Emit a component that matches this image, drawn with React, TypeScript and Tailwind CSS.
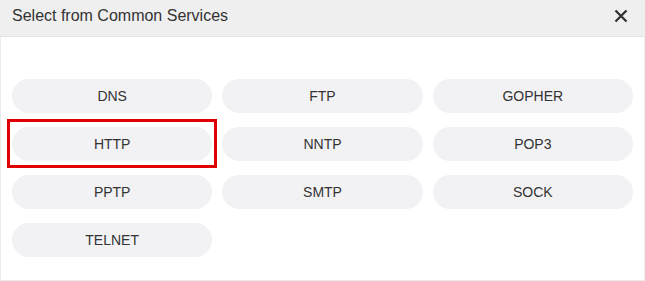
const services = ['DNS', 'FTP', 'GOPHER', 'HTTP', 'NNTP', 'POP3', 'PPTP', 'SMTP', 'SOCK', 'TELNET'];

export default function App() {
  return (
    <div className="w-[645px] h-[281px] bg-white font-['Liberation_Sans',Arial,sans-serif] text-[#333]">
      <div className="h-[37px] bg-[#efefef] border-b border-[#e4e4e4] flex items-start justify-between pl-[12px] pr-[17px]">
        <span className="mt-[4px] text-[16px] leading-[24px] text-[#333]">Select from Common Services</span>
        <svg width="14" height="14" viewBox="0 0 14 14" className="mt-[9px] text-[#333]">
          <path d="M1.5 1.5 L12.5 12.5 M12.5 1.5 L1.5 12.5" stroke="currentColor" strokeWidth="2.3" />
        </svg>
      </div>
      <div className="h-[244px] border-x border-b border-[#ececec] px-[11px] pt-[42px] pb-[23px]">
        <div className="grid grid-cols-3 gap-x-[10px] gap-y-[14px]">
          {services.map((s) => (
            <div key={s} className="relative">
              <button className="w-full h-[34px] rounded-full bg-[#f2f2f4] text-[14px] text-[#333]">
                {s}
              </button>
              {s === 'HTTP' && (
                <div className="absolute -left-[5px] -right-[5px] -top-[8px] -bottom-[7px] border-[3px] border-[#e00000] pointer-events-none" />
              )}
            </div>
          ))}
        </div>
      </div>
    </div>
  );
}
